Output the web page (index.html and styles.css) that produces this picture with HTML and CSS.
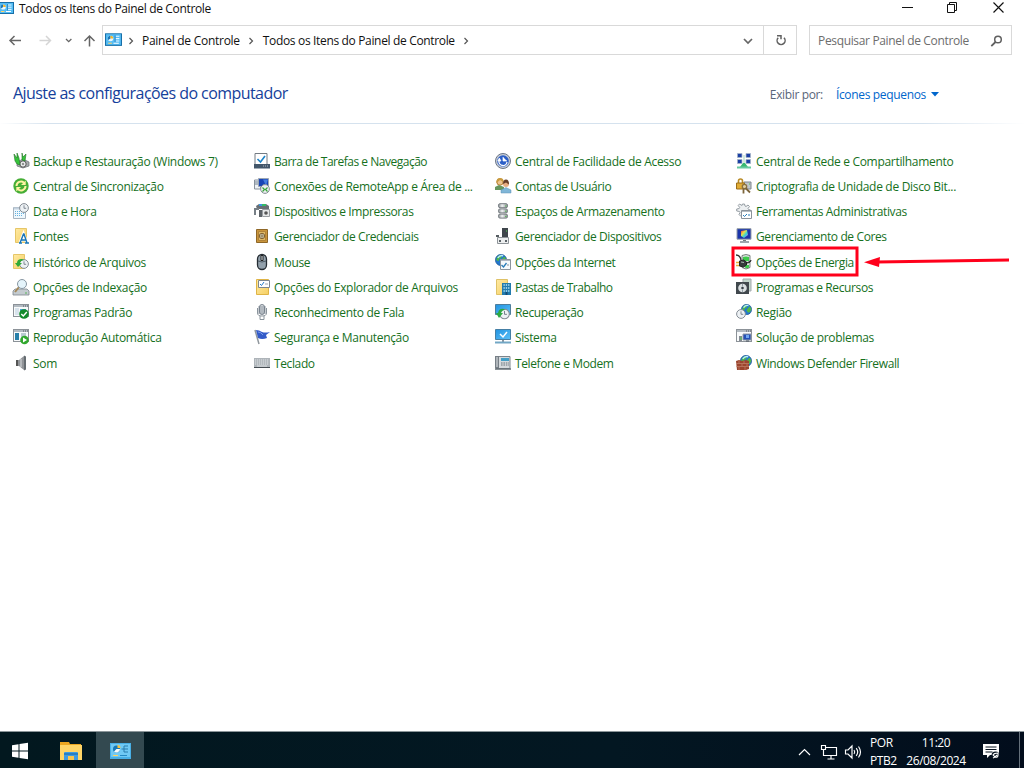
FILE: index.html
```html
<!DOCTYPE html>
<html lang="pt-BR">
<head>
<meta charset="utf-8">
<title>Todos os Itens do Painel de Controle</title>
<link rel="stylesheet" href="styles.css">
</head>
<body>
<svg class="defs" width="0" height="0" aria-hidden="true">
  <defs>
    <linearGradient id="blue" x1="0" y1="0" x2="1" y2="1"><stop offset="0" stop-color="#2192e0"/><stop offset="1" stop-color="#5bc0f8"/></linearGradient>
    <linearGradient id="folder" x1="0" y1="0" x2="1" y2="1"><stop offset="0" stop-color="#ffeaa3"/><stop offset="1" stop-color="#f5cf63"/></linearGradient>
    <linearGradient id="metal" x1="0" y1="0" x2="1" y2="0"><stop offset="0" stop-color="#8a8f93"/><stop offset=".4" stop-color="#f0f2f3"/><stop offset="1" stop-color="#8a8f93"/></linearGradient>
    <linearGradient id="spectrum" x1="0" y1="0" x2="1" y2="1"><stop offset="0" stop-color="#f33"/><stop offset=".35" stop-color="#e6e04b"/><stop offset=".6" stop-color="#32d6d6"/><stop offset="1" stop-color="#e05be6"/></linearGradient>
    <symbol id="panel" viewBox="0 0 16 12">
      <rect x=".5" y=".5" width="15" height="11" fill="#55bdf5" stroke="#176fa8"/>
      <circle cx="5.2" cy="5" r="2.6" fill="#e9f7ff"/><path d="M5.2 5V2.4A2.6 2.6 0 0 0 3 6.5z" fill="#1c76b5"/><path d="M5.2 5V2.4A2.6 2.6 0 0 1 7.8 5z" fill="#f4b62b"/>
      <path d="M10 3h3.5M10 5.2h3.5M10 7.4h3.5" stroke="#e9f7ff"/><path d="M9.5 2v6.5" stroke="#1c76b5" stroke-width=".7"/>
      <path d="M3 9.5h3.5" stroke="#ffd36b"/><path d="M8 9.5h5" stroke="#fff"/>
    </symbol>
    <symbol id="globe" viewBox="0 0 10 10">
      <circle cx="5" cy="5" r="4.7" fill="#2377ce" stroke="#164b86" stroke-width=".5"/>
      <path d="M2 2.2Q4 .2 6 1L5 3.5 3.5 4 3 6 1 5zM6 4l2-2 1.4 2.5-1 2.5L6.5 8 5 6z" fill="#51b944"/><path d="M2.3 3.2Q4 .8 6.8 1.4" stroke="#b8ebff" fill="none" stroke-width="1.2"/>
    </symbol>
    <symbol id="clock" viewBox="0 0 10 10">
      <circle cx="5" cy="5" r="4.4" fill="#edf1f4" stroke="#858d95"/><path d="M5 2.3V5.3H7.2" fill="none" stroke="#68727d" stroke-width=".8"/>
    </symbol>
    <symbol id="window" viewBox="0 0 16 13">
      <rect x=".5" y=".5" width="15" height="12" fill="#f8fafb" stroke="#8c9298"/><path d="M1 2h14" stroke="#b3bbc2" stroke-width="2"/><path d="M10 2h1m1 0h1m1 0h1" stroke="#525960"/>
    </symbol>
    <symbol id="check" viewBox="0 0 10 10"><circle cx="5" cy="5" r="4.8" fill="#128a2b"/><path d="M2.3 5l2 2 3.5-4" fill="none" stroke="#fff" stroke-width="1.4"/></symbol>
  </defs>
</svg>

<div class="window">
  <header class="titlebar">
    <svg class="title-icon" viewBox="0 0 16 12"><use href="#panel"/></svg>
    <h1 class="title">Todos os Itens do Painel de Controle</h1>
    <svg class="caption-buttons" viewBox="0 0 110 16" fill="none" stroke="#111">
      <path d="M2 7.5h11"/><path d="M47.500 4.500h7v8h-7zM49.500 4.500v-2h7v8h-2"/><path d="M93.500 2.500l10 10m0-10l-10 10" stroke-width="1.150"/>
    </svg>
  </header>

  <nav class="navbar">
    <svg class="nav-arrows" viewBox="0 0 102 30" fill="none" stroke="#666" stroke-width="1.5">
      <path d="M21 15.500H10m4.500-4.500L10 15.500l4.500 4.500"/><path d="M39.500 15.500h11m-4.500-4.500l4.500 4.500-4.500 4.500" stroke="#d5d5d5"/><path d="M66 14l2.700 2.700L71.400 14" stroke-width="1.3"/><path d="M89.500 21.500V11m-5 5l5-5 5 5"/>
    </svg>
    <div class="address">
      <svg class="address-icon" viewBox="0 0 16 12"><use href="#panel"/></svg>
      <svg class="chevron" viewBox="0 0 6 8"><path d="M1.500 1l3 3-3 3"/></svg>
      <span class="crumb crumb-root">Painel de Controle</span>
      <svg class="chevron" viewBox="0 0 6 8"><path d="M1.500 1l3 3-3 3"/></svg>
      <span class="crumb crumb-current">Todos os Itens do Painel de Controle</span>
      <svg class="chevron" viewBox="0 0 6 8"><path d="M1.500 1l3 3-3 3"/></svg>
      <svg class="dropdown" viewBox="0 0 10 7"><path d="M1 1l4 4 4-4" fill="none" stroke="#666" stroke-width="1.7"/></svg>
      <div class="refresh"><svg class="refresh-icon" viewBox="0 0 12 12"><path d="M3.200 3.800A4 4 0 1 0 9 3.800M2 1.700h4v3.600" fill="none" stroke="#606060" stroke-width="1.5"/></svg></div>
    </div>
    <div class="search"><span class="search-text">Pesquisar Painel de Controle</span>
      <svg class="search-icon" viewBox="0 0 13 13"><circle cx="8" cy="4.500" r="3.300" fill="none" stroke="#606060" stroke-width="1.5"/><path d="M5.500 7L1.300 11.200" stroke="#606060" stroke-width="1.8"/></svg>
    </div>
  </nav>

  <section class="heading">
    <h2 class="heading-title">Ajuste as configurações do computador</h2>
    <span class="view-label">Exibir por:</span><span class="view-mode">Ícones pequenos</span>
    <svg class="view-caret" viewBox="0 0 8 5"><path d="M0 0h8L4 4.500z" fill="#0066cc"/></svg>
  </section>

  <main class="items">
    <div class="column">
      <a class="item"><svg viewBox="0 0 16 16"><path d="M4 9l6-3 6 3v4l-6 2-6-2z" fill="#a8acae" stroke="#666c70" stroke-width=".7"/><circle cx="10" cy="11" r="3.200" fill="#e4e6e7" stroke="#555"/><circle cx="10" cy="11" r="1" fill="#777"/><path d="M1 1l3 4V0l2 5 1 7-3-1-2-3zM9 0l1 4 3-3-1 7-3-1z" fill="#35c43a" stroke="#237226" stroke-width=".6"/></svg><span>Backup e Restauração (Windows 7)</span></a>
      <a class="item"><svg viewBox="0 0 16 16"><circle cx="8" cy="8" r="7.700" fill="#46ae36"/><path d="M3.500 8A4.500 4.500 0 0 1 11 4.700M12.500 8A4.500 4.500 0 0 1 5 11.300" fill="none" stroke="#fff3a3" stroke-width="2"/><path d="M12.700 2.500v4.500H8zM3.300 13.500V9H8z" fill="#fff3a3"/></svg><span>Central de Sincronização</span></a>
      <a class="item"><svg viewBox="0 0 16 16"><path d="M.500 4.500h12v11H.500z" fill="#eff8fd" stroke="#a7b4c0"/><path d="M1 5.500h11" stroke="#c4d2df" stroke-width="2"/><path d="M2 8.500h9M2 10.500h9M2 12.500h7" stroke="#65b1df" stroke-dasharray="1 1"/><use href="#clock" x="6" y="0" width="10" height="10"/></svg><span>Data e Hora</span></a>
      <a class="item"><svg viewBox="0 0 16 16"><path d="M2.500.500h11v14h-11z" fill="url(#folder)" stroke="#e6c668"/><path d="M7 15l3.500-9 3.500 9M8.500 12h4" fill="none" stroke="#fff" stroke-width="3"/><path d="M7 15l3.500-9h.500l3 9M8.200 12h4.500M6 15h3M12 15h4" fill="none" stroke="#1975b7" stroke-width="1.400"/></svg><span>Fontes</span></a>
      <a class="item"><svg viewBox="0 0 16 16"><path d="M.500.500h11v14H.500z" fill="url(#folder)" stroke="#e6c668"/><use href="#clock" x="6" y="5" width="10" height="10"/><path d="M9 5Q4 5 4 9H2l3 4 4-4H7q0-2 4-3z" fill="#2faa36"/></svg><span>Histórico de Arquivos</span></a>
      <a class="item"><svg viewBox="0 0 16 16"><path d="M2 10h12l2 2v4H0v-4z" fill="#c4cbd0" stroke="#7e878e" stroke-width=".8"/><path d="M12 14h2" stroke="#58b759"/><path d="M6 8l-4 5" stroke="#a38758" stroke-width="2"/><circle cx="9" cy="5" r="4.500" fill="#e5f4fb" stroke="#8796a2"/></svg><span>Opções de Indexação</span></a>
      <a class="item"><svg viewBox="0 0 16 16"><use href="#window" y="0" width="16" height="13"/><path d="M2 4h4v7H2z" fill="#d8e3ec"/><path d="M7 5h6v4H7z" fill="#4da3da"/><use href="#check" x="6" y="5" width="10" height="10"/></svg><span>Programas Padrão</span></a>
      <a class="item"><svg viewBox="0 0 16 16"><use href="#window" y="0" width="16" height="13"/><path d="M2 4h4v7H2z" fill="#277fa9"/><path d="M8 5h5M8 7h5" stroke="#7b9ca7"/><circle cx="11.500" cy="11" r="4.300" fill="#30a82d"/><path d="M10 8.500l4 2.500-4 2.500z" fill="#fff"/></svg><span>Reprodução Automática</span></a>
      <a class="item"><svg viewBox="0 0 16 16"><path d="M3 5h3l5-4v14l-5-4H3z" fill="#929599"/><path d="M11 .500l2 1v13l-2 1z" fill="#656c71"/><path d="M3 5h2v6H3z" fill="#555"/><path d="M8 4v8" stroke="#c2c6c9" stroke-width="1.500"/></svg><span>Som</span></a>
    </div>
    <div class="column">
      <a class="item tight"><svg viewBox="0 0 16 16"><path d="M1 .500h12v11H1z" fill="#fff" stroke="#737b83"/><path d="M0 11h16v4.500H0z" fill="#42566a"/><path d="M9 13h6" stroke="#aab4be" stroke-dasharray="1 1"/><path d="M3.500 6l3 3L11 3" fill="none" stroke="#1b83c9" stroke-width="1.600"/></svg><span>Barra de Tarefas e Navegação</span></a>
      <a class="item"><svg viewBox="0 0 16 16"><path d="M.500 2h6v9h-6z" fill="#eef2f5" stroke="#8a939d"/><path d="M4.500.500h10v8h-10z" fill="#1945b5" stroke="#9ca7b4"/><path d="M9 1.500h5l-2 6z" fill="#457de0"/><path d="M1 4h3M1 6h3" stroke="#718090"/><circle cx="11" cy="11" r="4.400" fill="#eceef0" stroke="#899198"/><path d="M8.500 9.500l2 2-2 2m5-4l-2 2 2 2" fill="none" stroke="#37a53a" stroke-width="1.200"/></svg><span>Conexões de RemoteApp e Área de ...</span></a>
      <a class="item snug"><svg viewBox="0 0 16 16"><path d="M2 3l3-2h7l3 2v3H3z" fill="#686e74"/><path d="M5 1h3v2H5z" fill="#3a96dd"/><path d="M8 1h4v2H8z" fill="#35ba65"/><path d="M0 5h5v2H2v5H0z" fill="#777f86"/><path d="M5 7h3v7H5z" fill="#5c6267"/><path d="M8.500 6.500h7v7h-7z" fill="#e5e7e8" stroke="#999da1"/><circle cx="12" cy="10" r="1.800" fill="#555"/></svg><span>Dispositivos e Impressoras</span></a>
      <a class="item snug"><svg viewBox="0 0 16 16"><path d="M2.500 1.500h11v13h-11z" fill="#c9953c" stroke="#8f6727"/><path d="M4.500 3.500h7v9h-7z" fill="#dfb966" stroke="#b18338"/><circle cx="8" cy="8" r="2.700" fill="#d9d4ba" stroke="#806030"/><path d="M8 6v4M6 8h4" stroke="#76623c" stroke-width=".7"/></svg><span>Gerenciador de Credenciais</span></a>
      <a class="item"><svg viewBox="0 0 16 16"><rect x="3.500" y=".500" width="9" height="15" rx="4.500" fill="#93a1ac" stroke="#252c33" stroke-width="1.300"/><path d="M4 7q4 2 8 0" fill="none" stroke="#4e5b66"/><path d="M7 1.500h2v5H7z" fill="#dce3e8" stroke="#222"/></svg><span>Mouse</span></a>
      <a class="item"><svg viewBox="0 0 16 16"><path d="M2.500.500h12v15h-12z" fill="url(#folder)" stroke="#dfb446"/><path d="M4.500 1.500h11v7h-11z" fill="#fff" stroke="#7d878f"/><path d="M6 5l1.500 1.500L10 3" fill="none" stroke="#237bc9"/><path d="M11 5h3" stroke="#9ca5ae"/></svg><span>Opções do Explorador de Arquivos</span></a>
      <a class="item"><svg viewBox="0 0 16 16"><rect x="5.500" y=".500" width="5" height="10" rx="2.500" fill="#d9dee1" stroke="#7b858f"/><path d="M3.500 4v5q0 3 4.500 3t4.500-3V4M6 12v3.500h4V12" fill="none" stroke="#8a949c"/><path d="M4 3h8M4 5h8M4 7h8M4 9h8" stroke="#77828d" stroke-width=".8"/></svg><span>Reconhecimento de Fala</span></a>
      <a class="item"><svg viewBox="0 0 16 16"><path d="M1 1l4 14" stroke="#90979d" stroke-width="1.500"/><path d="M2 1q3 0 6 2 3 1 8 0l-4 3 1 3q-5 2-9 0z" fill="#345bc8"/><path d="M4 3q3 0 5 3" fill="none" stroke="#799be9"/></svg><span>Segurança e Manutenção</span></a>
      <a class="item snug"><svg viewBox="0 0 16 16"><path d="M0 3h16v10H0z" fill="#aeb4b9"/><path d="M0 12.500h16" stroke="#464d53"/><path d="M1 5h14M1 7h14M1 9h14" stroke="#e1e5e8" stroke-dasharray="1.200 .800"/><path d="M3 11h10" stroke="#dce0e3"/></svg><span>Teclado</span></a>
    </div>
    <div class="column">
      <a class="item"><svg viewBox="0 0 16 16"><circle cx="8" cy="8" r="7.500" fill="#c8ced7" stroke="#6b7688"/><circle cx="8" cy="8" r="5.800" fill="#2c5fc7"/><path d="M4 8a4 4 0 0 0 8 1" fill="none" stroke="#fff" stroke-width="1.300"/><path d="M2.800 8l1.500-3L6 8zM8 4v4h4" fill="#fff" stroke="#fff" stroke-width=".700"/></svg><span>Central de Facilidade de Acesso</span></a>
      <a class="item snug"><svg viewBox="0 0 16 16"><circle cx="5" cy="4" r="3.200" fill="#edc38f" stroke="#b47e31"/><path d="M0 12V9l4-2 5 2v3z" fill="#66955e"/><path d="M1.500 5q-.500-5 3.500-5t3.500 4L5 2z" fill="#c99b40"/><circle cx="11" cy="6" r="3" fill="#e7ad82"/><path d="M8 6q0-4.500 3-4.500t3 5l-3-2z" fill="#653c27"/><path d="M6 15v-3l5-2.500 5 2.500v3z" fill="#80b6d7" stroke="#5c91b4" stroke-width=".5"/></svg><span>Contas de Usuário</span></a>
      <a class="item snug"><svg viewBox="0 0 16 16"><rect x="3.500" y=".700" width="9" height="4" rx="1.500" fill="url(#metal)" stroke="#777d82"/><rect x="3.500" y="5.900" width="9" height="4" rx="1.500" fill="url(#metal)" stroke="#777d82"/><rect x="3.500" y="11.100" width="9" height="4" rx="1.500" fill="url(#metal)" stroke="#777d82"/><path d="M10 3h1.500M10 8.200h1.500M10 13.400h1.500" stroke="#54b854"/></svg><span>Espaços de Armazenamento</span></a>
      <a class="item snug"><svg viewBox="0 0 16 16"><path d="M7 0h6v9H7z" fill="#3f464c"/><path d="M11 3h1" stroke="#55dc55"/><path d="M1 7h3v2H1z" fill="#555c61"/><path d="M2.500 9.500h11v6h-11z" fill="#eceeef" stroke="#8e9499"/><path d="M4 12h2v2H4zM10 12h2v2h-2z" fill="#5b6267"/></svg><span>Gerenciador de Dispositivos</span></a>
      <a class="item snug"><svg viewBox="0 0 16 16"><use href="#globe" width="12" height="12"/><path d="M5.500 5.500h10v10h-10z" fill="#f5f9fc" stroke="#8b949d"/><path d="M6 6.500h9" stroke="#b0b9c4"/><path d="M6.500 11l2 2 3-4" fill="none" stroke="#267bb8" stroke-width="1.300"/><path d="M12 11h2" stroke="#8b949d"/></svg><span>Opções da Internet</span></a>
      <a class="item tight"><svg viewBox="0 0 16 16"><path d="M1.500.500h11v15h-11z" fill="url(#folder)" stroke="#dfc267"/><path d="M7 4h9v12H7z" fill="#227bad"/><path d="M8.500 6h6M8.500 9h6M8.500 12h6" stroke="#b9e6fa" stroke-width="1.500" stroke-dasharray="1.300 1"/><path d="M10.500 13h2v3h-2z" fill="#154c75"/></svg><span>Pastas de Trabalho</span></a>
      <a class="item snug"><svg viewBox="0 0 16 16"><path d="M.500 .500h15v10H.500z" fill="url(#blue)" stroke="#4f7e9c"/><use href="#clock" x="4" y="4.500" width="11" height="11"/><path d="M9 5Q4 4 3 9H1l3 5 4-5H6q1-3 4-3z" fill="#2daa42"/></svg><span>Recuperação</span></a>
      <a class="item snug"><svg viewBox="0 0 16 16"><path d="M.500.500h15v10H.500z" fill="url(#blue)" stroke="#457fa5"/><path d="M5 5l3 3 4-5" fill="none" stroke="#fff" stroke-width="1.500"/><path d="M7 11h2v2H7z" fill="#89949d"/><path d="M0 13.500h16" stroke="#72a7c5" stroke-width="2"/></svg><span>Sistema</span></a>
      <a class="item snug"><svg viewBox="0 0 16 16"><path d="M1 1.500h14v12H1z" fill="#d6dadd" stroke="#7c858c"/><path d="M0 1h4v12H0z" fill="#777f86"/><path d="M1.500 2h1v10h-1z" fill="#e7ebee"/><path d="M6 3h8v3H6z" fill="#439fc7"/><path d="M6 8h8M6 10h8" stroke="#69737a" stroke-dasharray="1.600 .800"/><path d="M0 14h16" stroke="#656e75" stroke-width="1.500"/></svg><span>Telefone e Modem</span></a>
    </div>
    <div class="column">
      <a class="item"><svg viewBox="0 0 16 16"><path d="M1.500.500h4.500v4H1.500zM10 .500h4.500v4H10zM1.500 6.500H6v4H1.500zM10 6.500h4.500v4H10z" fill="#1b3fa5" stroke="#a5b4c7" stroke-width=".8"/><path d="M8 2v10" stroke="#a2d5bd"/><path d="M7 10h2l3 4H4z" fill="#38b870"/><path d="M1 13.500h14v2H1z" fill="#66caa0"/></svg><span>Central de Rede e Compartilhamento</span></a>
      <a class="item"><svg viewBox="0 0 16 16"><path d="M8 4h7v7H8z" fill="#bfc5cb" stroke="#7f868e"/><path d="M2.500 6V3q0-2 2-2t2 2v3" fill="none" stroke="#ba8c27" stroke-width="1.600"/><path d="M.500 5h8v6h-8z" fill="#e1ac34" stroke="#9a6d19"/><circle cx="8.500" cy="8.500" r="2.200" fill="#e2d09e" stroke="#89703f" stroke-width="1.300"/><path d="M9.500 10l4.500 4.500M7.500 10.500v5" stroke="#7d653a" stroke-width="1.800"/><path d="M13 6h1" stroke="#48c848"/></svg><span>Criptografia de Unidade de Disco Bit...</span></a>
      <a class="item snug"><svg viewBox="0 0 16 16"><path d="M6.500 1h2L9 3l1 .500 2-1.500 1.500 1.500L12 5.500l.500 1 2 .500v2l-7 4-1-1-2 1L3 11.500 4 9.500 3.500 8.500.700 8V6l2.500-.500.500-1-1.500-2L3.500 1 6 2.500z" fill="#eceff1" stroke="#8d959c" stroke-width=".9"/><path d="M5.500 7.500h10v8h-10z" fill="#fff" stroke="#8b939b"/><path d="M6 8.500h9" stroke="#b5bdc4"/><path d="M7 12l1.500 1.500L11 11M12 12h2" fill="none" stroke="#257cbb"/></svg><span>Ferramentas Administrativas</span></a>
      <a class="item snug"><svg viewBox="0 0 16 16"><path d="M1 .700h14v10.500H1z" fill="#1a35aa" stroke="#979fa7"/><path d="M5 3l6-1 1 5-4 3-3-2z" fill="url(#spectrum)"/><path d="M7 12h3v1H7z" fill="#777e84"/><path d="M4 14h9" stroke="#9fa6ad" stroke-width="2"/></svg><span>Gerenciamento de Cores</span></a>
      <a class="item snug"><svg viewBox="0 0 16 16"><path d="M6 1.500q4-2 8 0v12q-4 3-8 0z" fill="#dce5df" stroke="#59635f" stroke-width=".8"/><path d="M7 3q3-1 6 0v4H7zM9 11h4v2.500q-2 1-4 0z" fill="#3ecb4c"/><path d="M0 1q4 0 5 5" fill="none" stroke="#333" stroke-width="1.300"/><path d="M0 8.500h4M0 11.500h4" stroke="#ebb13a" stroke-width="1.500"/><path d="M3.500 7l4-1 3 2v3l-3 2-4-1zM10 9q5 0 5-3" fill="#353b3b" stroke="#222"/><path d="M5 8l3 .500" stroke="#aeb8b5"/></svg><span>Opções de Energia</span>
        <svg class="callout" viewBox="0 0 280 32"><rect x="2" y="2" width="124" height="27" fill="none" stroke="#ff001b" stroke-width="3"/><path d="M146 16L278 14" stroke="#ff001b" stroke-width="3"/><path d="M133 16.300L149 11l-1 10z" fill="#ff001b"/></svg>
      </a>
      <a class="item snug"><svg viewBox="0 0 16 16"><path d="M7 0h8v12H7z" fill="#c3d6cc" stroke="#a4aaae"/><path d="M0 3h13v12H0z" fill="#41484d"/><circle cx="6.500" cy="9" r="4.300" fill="#dbe0e2"/><circle cx="6.500" cy="9" r="1.300" fill="#374047"/><path d="M6.500 5v2.500M6.500 10.500v2.500" stroke="#95a1a8"/></svg><span>Programas e Recursos</span></a>
      <a class="item"><svg viewBox="0 0 16 16"><use href="#globe" x="5" y="0" width="11" height="11"/><use href="#clock" x="0" y="5" width="10" height="10"/></svg><span>Região</span></a>
      <a class="item"><svg viewBox="0 0 16 16"><use href="#window" y="0" width="16" height="13"/><path d="M7 5h8v6H7z" fill="#2450b6" stroke="#929ba6"/><path d="M10 6h3v3h-3z" fill="#6fa6f1"/><path d="M3 7h3v5H3z" fill="#858b93"/><path d="M5 8v3" stroke="#55cf55"/><path d="M10 12h3" stroke="#4b5560"/></svg><span>Solução de problemas</span></a>
      <a class="item snug"><svg viewBox="0 0 16 16"><use href="#globe" x="4" y="0" width="12" height="12"/><path d="M0 6l3-1 3 1 4-1 3 1v8l-3 1H1z" fill="#9c452e"/><path d="M0 8.500h13M0 11.500h13M3 6v2.500M8 6v2.500M6 9v2M11 9v2M3 12v3M9 12v3" stroke="#c98f7b" stroke-width=".6"/></svg><span>Windows Defender Firewall</span></a>
    </div>
  </main>

  <footer class="taskbar">
    <div class="task start"><svg viewBox="0 0 18 18"><path d="M1 3.200l6.500-1v6.300H1zM8.500 2L17 .700v7.800H8.500zM1 9.500h6.500v6.300l-6.500-1zM8.500 9.500H17v7.800L8.500 16z" fill="#fff"/></svg></div>
    <div class="task explorer"><svg viewBox="0 0 22 20"><path d="M0 1h9l1 2h11v16H0z" fill="#eca620"/><path d="M0 4h22v15H0z" fill="#ffd567"/><path d="M4 19v-7q0-1 1-1h12q1 0 1 1v7h-4v-4H8v4z" fill="#3f9be1"/><path d="M4 12h14v2H4z" fill="#287fc4"/><path d="M8 15h6v4H8z" fill="#f9c650"/></svg></div>
    <div class="task active"><svg viewBox="0 0 21 16"><path d="M0 0h21v16H0z" fill="#48afe6"/><path d="M1 1h19v13H1z" fill="#70c9f4"/><circle cx="6.500" cy="6" r="3.500" fill="#1677b7"/><path d="M6.500 6h3.500A3.500 3.500 0 0 1 4 8.500z" fill="#f6fbfd"/><path d="M7.500 2v3h3q0-3-3-3z" fill="#f8c341"/><path d="M14 3h4M14 6h4M14 9h4M14 3v6M11.500 6H14" fill="none" stroke="#287cad"/><path d="M3 12.500h5" stroke="#ffd45c"/><path d="M10 12.500h7" stroke="#2589c3"/></svg></div>
    <div class="tray">
      <svg class="tray-icons" viewBox="0 0 64 18" fill="none" stroke="#fff" stroke-width="1.150">
        <path d="M1 12l5.500-5.500L12 12"/><path d="M28 4.500h10.500v8h-13v-3M33 13v3M29.500 16h7M23.500 2.500h4v4h-4zM25.500 7v3"/><path d="M47.500 7h2.500l4-4v12l-4-4h-2.500zM56 7q1.500 2 0 4M58.200 5.200q3 3.800 0 7.600M60.500 3.500q4 5.500 0 11"/>
      </svg>
      <div class="language"><span>POR</span><span>PTB2</span></div>
      <div class="clock"><span>11:20</span><span>26/08/2024</span></div>
      <svg class="notification" viewBox="0 0 18 18"><path d="M1 1h16v11H8l-3 3v-3H1z" fill="#fff"/><path d="M3.500 4h11M3.500 6.500h11M3.500 9h7" stroke="#06121f"/><circle cx="13.500" cy="12.500" r="4" fill="#06121f"/><path d="M11 15l2-1q3 1 3-2v-2q-4 0-5 2l2 2 2-2" fill="none" stroke="#fff" stroke-width="1.100"/></svg>
      <div class="show-desktop"></div>
    </div>
  </footer>
</div>
</body>
</html>
```

FILE: styles.css
```css
* { box-sizing: border-box; }
body { margin: 0; overflow: hidden; background: #fff; color: #111; font: 12px/16px "Open Sans", "Noto Sans", sans-serif; }
svg { display: block; flex: none; overflow: visible; }
.defs { position: absolute; }
.window { width: 1024px; height: 768px; display: flex; flex-direction: column; }
.titlebar { height: 25px; display: flex; align-items: flex-start; }
.title-icon { width: 16px; height: 12px; margin: 2px 0 0 -2px; }
.title { margin: 1px 0 0 5px; font-size: 12px; line-height: 16px; font-weight: 400; letter-spacing: -.34px; white-space: nowrap; }
.caption-buttons { width: 110px; height: 16px; margin-left: auto; margin-right: 14px; }
.navbar { height: 31px; display: flex; }
.nav-arrows { width: 102px; height: 30px; }
.address { width: 695px; height: 30px; border: 1px solid #d9d9d9; display: flex; align-items: center; }
.address-icon { width: 17px; height: 13px; margin: -2px 6px 0 2px; }
.chevron { width: 6px; height: 8px; margin-top: 1px; fill: none; stroke: #555; stroke-width: 1.2; }
.crumb { margin: 1px 8px 0; white-space: nowrap; }
.crumb-root { letter-spacing: -.27px; }
.crumb-current { margin-left: 9px; letter-spacing: -.34px; }
.dropdown { width: 10px; height: 7px; margin-left: auto; margin-right: 10px; margin-top: 2px; }
.refresh { width: 33px; height: 28px; border-left: 1px solid #d9d9d9; display: grid; place-items: center; padding-left: 2px; }
.refresh-icon { width: 12px; height: 12px; }
.search { width: 203px; height: 30px; margin-left: 12px; padding: 0 8px; border: 1px solid #d9d9d9; display: flex; align-items: center; justify-content: space-between; color: #6d6d6d; }
.search-text { margin-top: 1px; letter-spacing: -.34px; }
.search-icon { width: 13px; height: 13px; margin-top: 3px; }
.heading { height: 68px; display: flex; align-items: center; border-bottom: 1px solid; border-image: linear-gradient(90deg, #fff, #d5e2ee 5%, #d5e2ee 90%, #fff) 1; padding: 9px 85px 0 13px; }
.heading-title { margin: -2px 0 0; color: #153f9b; font-size: 16px; line-height: 24px; font-weight: 400; letter-spacing: -.56px; white-space: nowrap; }
.view-label { margin: 2px 13px 0 auto; color: #596579; letter-spacing: -.36px; }
.view-mode { margin-top: 2px; color: #0066cc; letter-spacing: -.33px; }
.view-caret { width: 8px; height: 5px; margin-left: 5px; }
.items { flex: 1; display: grid; grid-template-columns: repeat(4, 241px); padding: 24px 0 0 13px; align-items: start; }
.column { display: flex; flex-direction: column; }
.item { position: relative; height: 25.25px; display: flex; align-items: center; gap: 4px; color: #16701d; letter-spacing: -.31px; white-space: nowrap; }
.item > span { padding-top: 2px; }
.snug { letter-spacing: -.38px; }
.tight { letter-spacing: -.49px; }
.item > svg { width: 16px; height: 16px; }
.item > .callout { position: absolute; left: -5px; top: -3px; width: 280px; height: 32px; }
.taskbar { height: 37px; display: flex; color: #fff; background: linear-gradient(90deg, #02181f, #031722 60%, #020d1c); border-top: 1px solid #8c969a; }
.task { width: 48px; display: grid; place-items: center; padding-top: 2px; }
.start { width: 40px; }
.start svg { width: 18px; height: 18px; }
.explorer { width: 56px; padding-left: 6px; }
.explorer svg { width: 22px; height: 20px; }
.active { background: #334950; }
.active svg { width: 21px; height: 16px; }
.tray { margin-left: auto; display: flex; align-items: center; }
.tray-icons { width: 64px; height: 18px; margin-top: 4px; margin-right: 8px; }
.language, .clock { display: flex; flex-direction: column; line-height: 17.5px; padding-top: 3px; letter-spacing: -.42px; }
.language { width: 36px; }
.clock { width: 60px; align-items: center; }
.notification { width: 18px; height: 18px; margin: 3px 19px 0 16px; }
.show-desktop { width: 5px; height: 36px; border-left: 1px solid #65707b; }
```
